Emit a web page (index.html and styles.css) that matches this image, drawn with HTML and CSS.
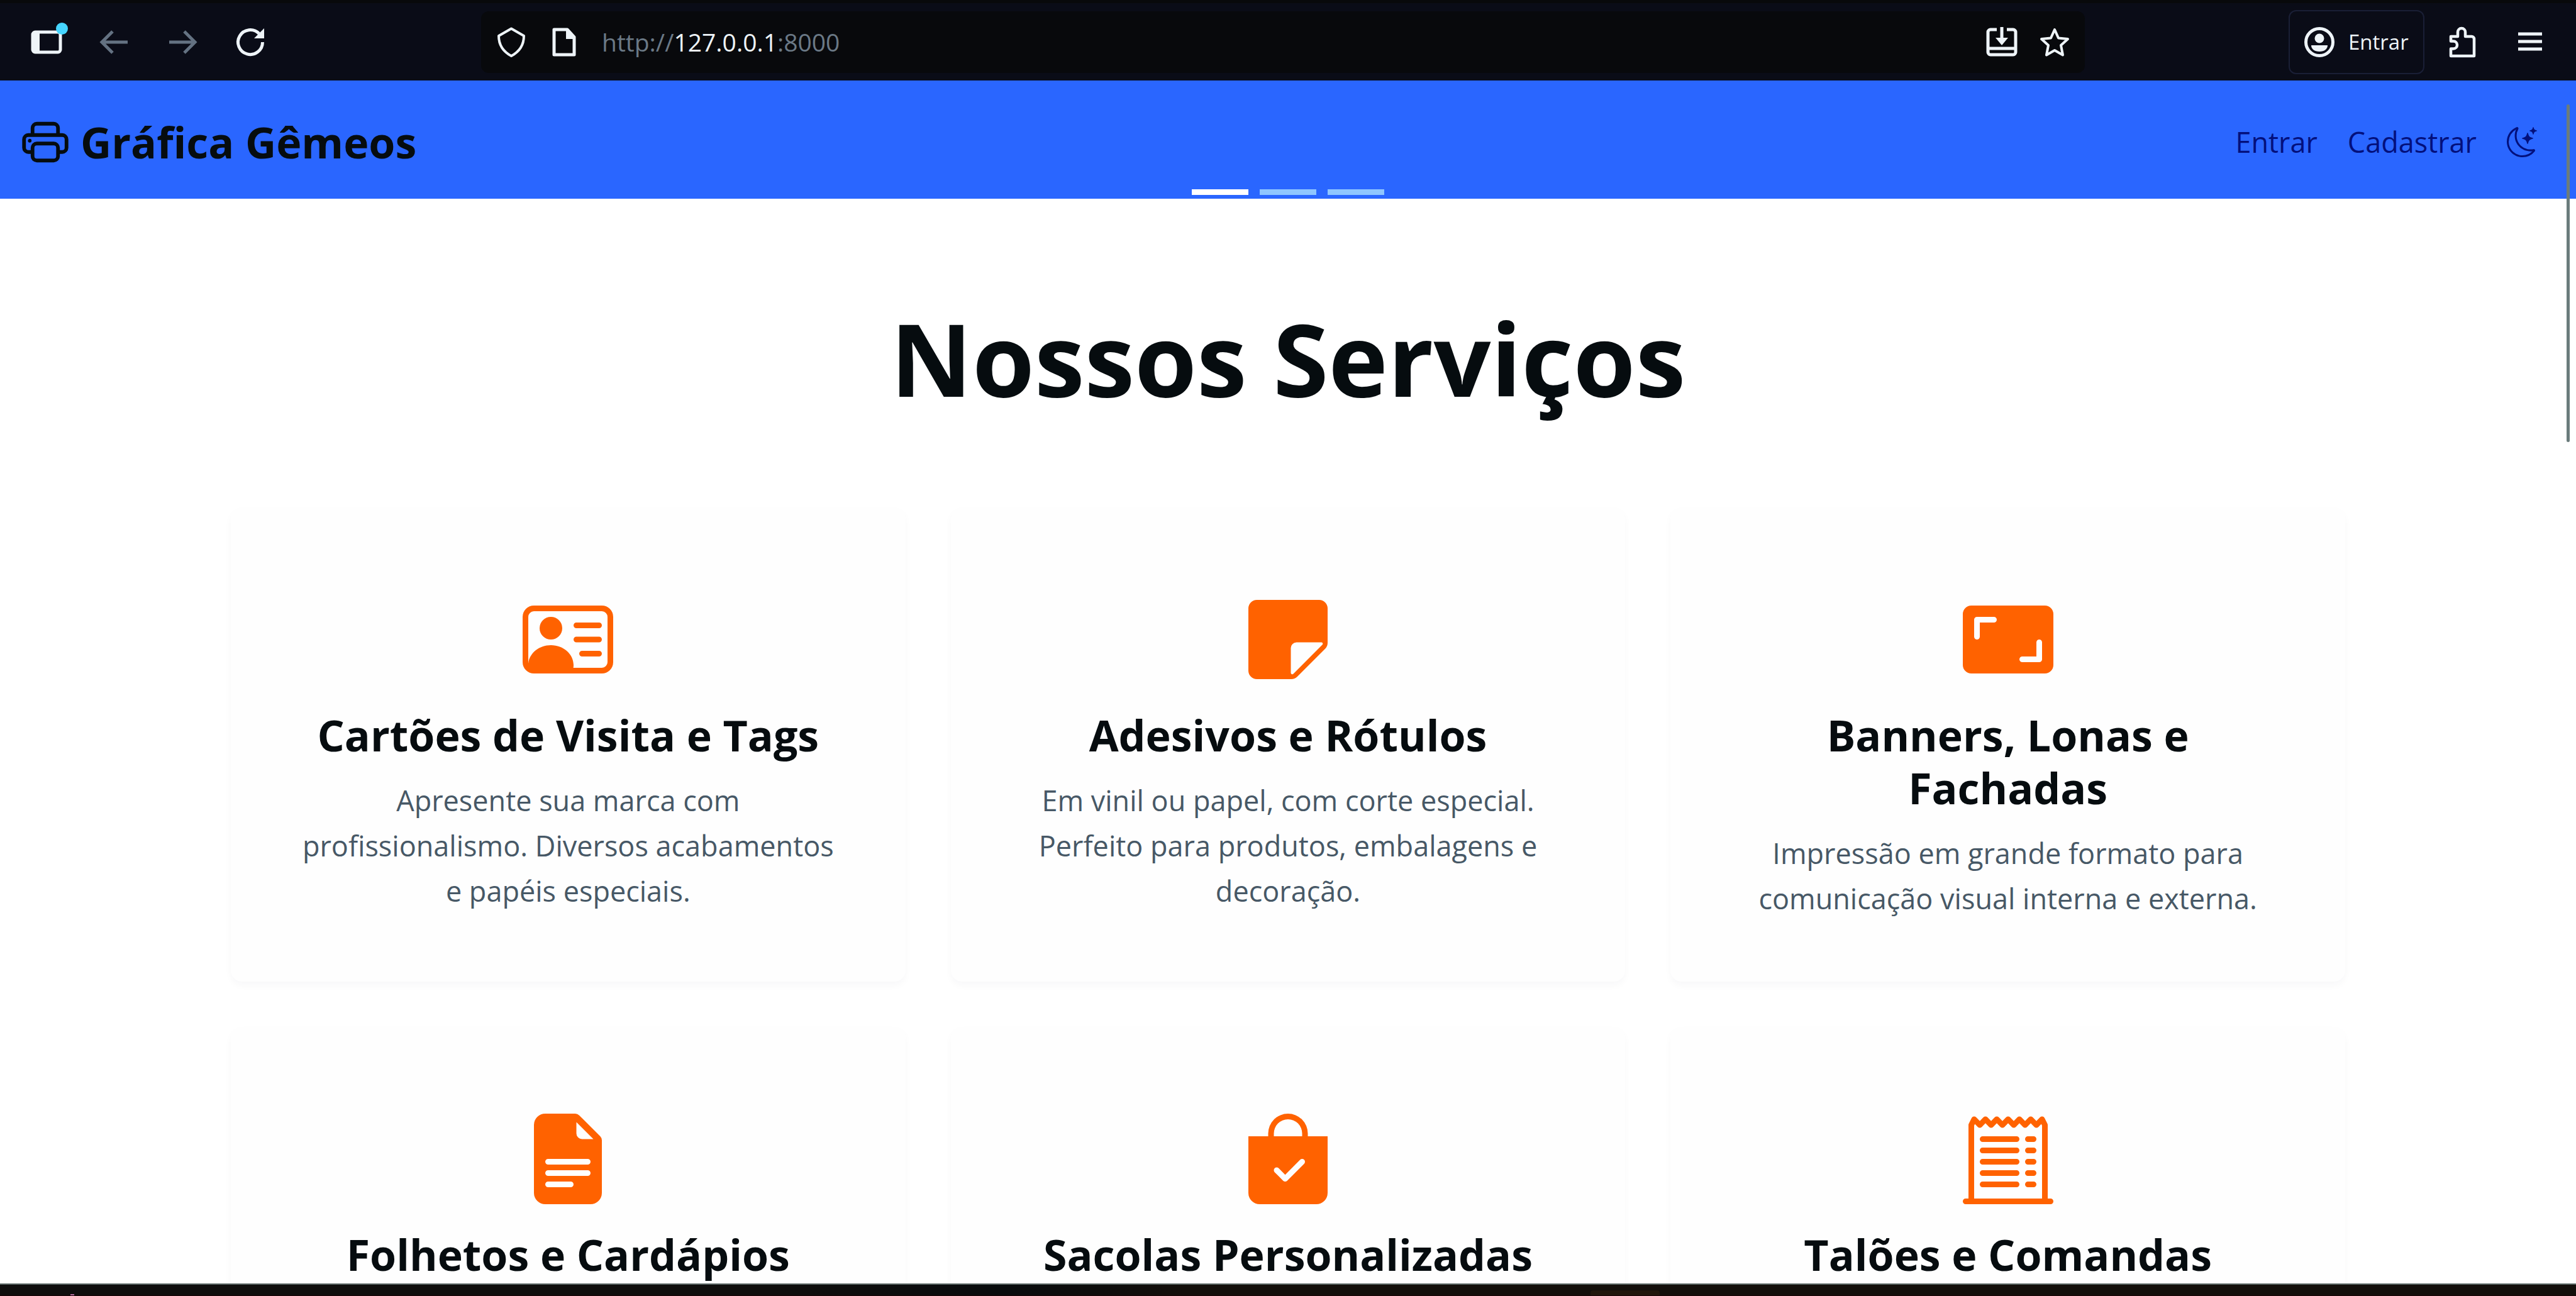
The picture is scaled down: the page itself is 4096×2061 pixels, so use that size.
FILE: index.html
```html
<!DOCTYPE html>
<html lang="pt-BR">
<head>
<meta charset="utf-8">
<title>Gráfica Gêmeos</title>
<link rel="stylesheet" href="styles.css">
</head>
<body>
<header class="toolbar">
  <div class="tools">
    <button class="tool" aria-label="Barra lateral">
      <svg class="glyph" viewBox="0 0 48 48"><rect x="2" y="8" width="44" height="32" rx="4" fill="none" stroke="currentColor" stroke-width="5"/><rect x="2" y="8" width="11" height="32" fill="currentColor"/></svg>
      <span class="dot"></span>
    </button>
    <button class="tool muted" aria-label="Voltar">
      <svg class="glyph" viewBox="0 0 48 48"><path d="M45 24H5M21 7 4 24l17 17" fill="none" stroke="currentColor" stroke-width="5"/></svg>
    </button>
    <button class="tool muted" aria-label="Avançar">
      <svg class="glyph" viewBox="0 0 48 48"><path d="M3 24h40M27 7l17 17-17 17" fill="none" stroke="currentColor" stroke-width="5"/></svg>
    </button>
    <button class="tool" aria-label="Recarregar">
      <svg class="glyph" viewBox="0 0 48 48"><path d="M43.500 24A19.500 19.500 0 1 1 38 10.500" fill="none" stroke="currentColor" stroke-width="5"/><path d="M46 2v16H30z" fill="currentColor"/></svg>
    </button>
  </div>
  <div class="address">
    <svg class="glyph" viewBox="0 0 48 48"><path d="M24 2.500 44 14c0 14-7 25-20 32C11 39 4 28 4 14z" fill="none" stroke="currentColor" stroke-width="4" stroke-linejoin="round"/></svg>
    <svg class="glyph" viewBox="0 0 48 48"><path d="M8 4h21l11 12v28H8z" fill="none" stroke="currentColor" stroke-width="5" stroke-linejoin="round"/><path d="M27 3v16h15z" fill="currentColor"/></svg>
    <div class="url" role="textbox" aria-label="Endereço">http://<span class="host">127.0.0.1</span>:8000</div>
    <svg class="glyph" viewBox="0 0 48 48"><path d="M16 4H6a4 4 0 0 0-4 4v32a4 4 0 0 0 4 4h36a4 4 0 0 0 4-4V8a4 4 0 0 0-4-4H32M2 34h44M24 0v22" fill="none" stroke="currentColor" stroke-width="5"/><path d="M14 17h20L24 29z" fill="currentColor"/></svg>
    <svg class="glyph" viewBox="0 0 48 48"><path d="m24 4 6 13.500 15 1.500-11 10 3 15.500L24 37l-13 7.500L14 29 3 19l15-1.500z" fill="none" stroke="currentColor" stroke-width="4" stroke-linejoin="round"/></svg>
  </div>
  <div class="account-tools">
    <button class="account">
      <svg class="glyph" viewBox="0 0 48 48"><circle cx="24" cy="24" r="21.500" fill="none" stroke="currentColor" stroke-width="5"/><circle cx="24" cy="18" r="7.500" fill="currentColor"/><path d="M11 29h26c0 6-5 10-13 10s-13-4-13-10z" fill="currentColor"/></svg>
      Entrar
    </button>
    <button class="tool" aria-label="Extensões">
      <svg class="glyph" viewBox="0 0 48 48"><path d="M6 46V34.500h4a6 6 0 0 0 0-12H6V15h11V8a6 6 0 0 1 12 0v7h10a4 4 0 0 1 4 4v27z" fill="none" stroke="currentColor" stroke-width="4.500" stroke-linejoin="round"/></svg>
    </button>
    <button class="tool" aria-label="Menu">
      <svg class="glyph" viewBox="0 0 48 48"><path d="M5 11h38M5 23h38M5 35h38" stroke="currentColor" stroke-width="5"/></svg>
    </button>
  </div>
</header>

<div class="page">
  <nav class="navbar">
    <a class="brand" href="#">
      <svg class="brand-icon" viewBox="0 0 16 16"><path d="M2.500 8a.5.5 0 1 0 0-1 .5.5 0 0 0 0 1"/><path d="M5 1a2 2 0 0 0-2 2v2H2a2 2 0 0 0-2 2v3a2 2 0 0 0 2 2h1v1a2 2 0 0 0 2 2h6a2 2 0 0 0 2-2v-1h1a2 2 0 0 0 2-2V7a2 2 0 0 0-2-2h-1V3a2 2 0 0 0-2-2zM4 3a1 1 0 0 1 1-1h6a1 1 0 0 1 1 1v2H4zm1 5a2 2 0 0 0-2 2v1H2a1 1 0 0 1-1-1V7a1 1 0 0 1 1-1h12a1 1 0 0 1 1 1v3a1 1 0 0 1-1 1h-1v-1a2 2 0 0 0-2-2zm7 2v3a1 1 0 0 1-1 1H5a1 1 0 0 1-1-1v-3a1 1 0 0 1 1-1h6a1 1 0 0 1 1 1"/></svg>
      Gráfica Gêmeos
    </a>
    <div class="links">
      <a href="#">Entrar</a>
      <a href="#">Cadastrar</a>
      <button class="theme" aria-label="Alternar tema">
        <svg class="theme-icon" viewBox="0 0 16 16"><path d="M6 .278a.77.77 0 0 1 .08.858 7.200 7.200 0 0 0-.878 3.460c0 4.021 3.278 7.277 7.318 7.277q.792-.001 1.533-.16a.79.79 0 0 1 .81.316.73.73 0 0 1-.031.893A8.350 8.350 0 0 1 8.344 16C3.734 16 0 12.286 0 7.710 0 4.266 2.114 1.312 5.124.06A.75.75 0 0 1 6 .278M4.858 1.311A7.270 7.270 0 0 0 1.025 7.710c0 4.020 3.279 7.276 7.319 7.276a7.320 7.320 0 0 0 5.205-2.162q-.506.063-1.029.063c-4.610 0-8.343-3.714-8.343-8.290 0-1.167.242-2.278.681-3.286"/><path d="M10.794 3.148a.217.217 0 0 1 .412 0l.387 1.162c.173.518.579.924 1.097 1.097l1.162.387a.217.217 0 0 1 0 .412l-1.162.387a1.730 1.730 0 0 0-1.097 1.097l-.387 1.162a.217.217 0 0 1-.412 0l-.387-1.162A1.730 1.730 0 0 0 9.310 6.593l-1.162-.387a.217.217 0 0 1 0-.412l1.162-.387a1.730 1.730 0 0 0 1.097-1.097zM13.863.099a.145.145 0 0 1 .274 0l.258.774c.115.346.386.617.732.732l.774.258a.145.145 0 0 1 0 .274l-.774.258a1.160 1.160 0 0 0-.732.732l-.258.774a.145.145 0 0 1-.274 0l-.258-.774a1.160 1.160 0 0 0-.732-.732l-.774-.258a.145.145 0 0 1 0-.274l.774-.258c.346-.115.617-.386.732-.732z"/></svg>
      </button>
    </div>
    <div class="indicators">
      <button class="indicator active" aria-label="Slide 1"></button>
      <button class="indicator" aria-label="Slide 2"></button>
      <button class="indicator" aria-label="Slide 3"></button>
    </div>
  </nav>

  <main class="services">
    <h1 class="heading">Nossos Serviços</h1>
    <div class="grid">
      <article class="card">
        <svg class="card-icon" viewBox="0 0 16 16"><path d="M5 8a2 2 0 1 0 0-4 2 2 0 0 0 0 4m4-2.500a.5.5 0 0 1 .5-.5h4a.5.5 0 0 1 0 1h-4a.5.5 0 0 1-.5-.5M9 8a.5.5 0 0 1 .5-.5h4a.5.5 0 0 1 0 1h-4A.5.5 0 0 1 9 8m1 2.500a.5.5 0 0 1 .5-.5h3a.5.5 0 0 1 0 1h-3a.5.5 0 0 1-.5-.5"/><path d="M2 2a2 2 0 0 0-2 2v8a2 2 0 0 0 2 2h12a2 2 0 0 0 2-2V4a2 2 0 0 0-2-2zM1 4a1 1 0 0 1 1-1h12a1 1 0 0 1 1 1v8a1 1 0 0 1-1 1H8.960q.04-.245.04-.5C9 10.567 7.210 9 5 9c-2.086 0-3.800 1.398-3.984 3.181A1 1 0 0 1 1 12z"/></svg>
        <h2 class="card-title">Cartões de Visita e Tags</h2>
        <p class="card-text">Apresente sua marca com profissionalismo. Diversos acabamentos e papéis especiais.</p>
      </article>
      <article class="card">
        <svg class="card-icon" viewBox="0 0 16 16"><path d="M2.500 1A1.500 1.500 0 0 0 1 2.500v11A1.500 1.500 0 0 0 2.500 15h6.086a1.500 1.500 0 0 0 1.060-.44l4.915-4.914A1.500 1.500 0 0 0 15 8.586V2.500A1.500 1.500 0 0 0 13.500 1zm6 8.500a1 1 0 0 1 1-1h4.396a.25.25 0 0 1 .177.427l-5.146 5.146a.25.25 0 0 1-.427-.177z"/></svg>
        <h2 class="card-title">Adesivos e Rótulos</h2>
        <p class="card-text">Em vinil ou papel, com corte especial. Perfeito para produtos, embalagens e decoração.</p>
      </article>
      <article class="card">
        <svg class="card-icon" viewBox="0 0 16 16"><path d="M0 12.500v-9A1.500 1.500 0 0 1 1.500 2h13A1.500 1.500 0 0 1 16 3.500v9a1.500 1.500 0 0 1-1.500 1.500h-13A1.500 1.500 0 0 1 0 12.500M2.500 4a.5.5 0 0 0-.5.5v3a.5.5 0 0 0 1 0V5h2.500a.5.5 0 0 0 0-1zm11 8a.5.5 0 0 0 .5-.5v-3a.5.5 0 0 0-1 0V11h-2.500a.5.5 0 0 0 0 1z"/></svg>
        <h2 class="card-title">Banners, Lonas e Fachadas</h2>
        <p class="card-text">Impressão em grande formato para comunicação visual interna e externa.</p>
      </article>
      <article class="card">
        <svg class="card-icon" viewBox="0 0 16 16"><path d="M9.293 0H4a2 2 0 0 0-2 2v12a2 2 0 0 0 2 2h8a2 2 0 0 0 2-2V4.707A1 1 0 0 0 13.707 4L10 .293A1 1 0 0 0 9.293 0M9.500 3.500v-2l3 3h-2a1 1 0 0 1-1-1M4.500 9a.5.5 0 0 1 0-1h7a.5.5 0 0 1 0 1zM4 10.500a.5.5 0 0 1 .5-.5h7a.5.5 0 0 1 0 1h-7a.5.5 0 0 1-.5-.5m.5 2.500a.5.5 0 0 1 0-1h4a.5.5 0 0 1 0 1z"/></svg>
        <h2 class="card-title">Folhetos e Cardápios</h2>
      </article>
      <article class="card">
        <svg class="card-icon" viewBox="0 0 16 16"><path fill-rule="evenodd" d="M10.500 3.500a2.500 2.500 0 0 0-5 0V4h5zm1 0V4H15v10a2 2 0 0 1-2 2H3a2 2 0 0 1-2-2V4h3.500v-.5a3.500 3.500 0 1 1 7 0m-.646 5.354a.5.5 0 0 0-.708-.708L7.500 10.793 6.354 9.646a.5.5 0 1 0-.708.708l1.500 1.500a.5.5 0 0 0 .708 0z"/></svg>
        <h2 class="card-title">Sacolas Personalizadas</h2>
      </article>
      <article class="card">
        <svg class="card-icon" viewBox="0 0 16 16"><path d="M3.500 4.500h6M3.500 6.500h6M3.500 8.500h6M3.500 10.500h6M3.500 12.500h6M11.500 4.500h1M11.500 6.500h1M11.500 8.500h1M11.500 10.500h1M11.500 12.500h1" stroke="currentColor" stroke-linecap="round"/><path d="M2.354.646a.5.5 0 0 0-.801.13l-.5 1A.5.5 0 0 0 1 2v13H.5a.5.5 0 0 0 0 1h15a.5.5 0 0 0 0-1H15V2a.5.5 0 0 0-.053-.224l-.5-1a.5.5 0 0 0-.8-.13L13 1.293l-.646-.647a.5.5 0 0 0-.708 0L11 1.293l-.646-.647a.5.5 0 0 0-.708 0L9 1.293 8.354.646a.5.5 0 0 0-.708 0L7 1.293 6.354.646a.5.5 0 0 0-.708 0L5 1.293 4.354.646a.5.5 0 0 0-.708 0L3 1.293zm-.217 1.198.51.51a.5.5 0 0 0 .707 0L4 1.707l.646.647a.5.5 0 0 0 .708 0L6 1.707l.646.647a.5.5 0 0 0 .708 0L8 1.707l.646.647a.5.5 0 0 0 .708 0L10 1.707l.646.647a.5.5 0 0 0 .708 0L12 1.707l.646.647a.5.5 0 0 0 .708 0l.509-.51.137.274V15H2V2.118z"/></svg>
        <h2 class="card-title">Talões e Comandas</h2>
      </article>
    </div>
  </main>
  <div class="scroll-thumb"></div>
</div>

<footer class="taskbar"><span class="task-mark"></span><span class="task-active"></span></footer>
</body>
</html>
```
FILE: styles.css
```css
* {
  box-sizing: border-box;
}

body {
  margin: 0;
  height: 100vh;
  display: flex;
  flex-direction: column;
  overflow: hidden;
  background: #fff;
  color: #060c0f;
  font-family: "Open Sans", "Noto Sans", sans-serif;
  font-size: 45px;
  line-height: 72px;
}

button {
  padding: 0;
  border: 0;
  background: none;
  color: inherit;
  font: inherit;
}

a {
  color: inherit;
  text-decoration: none;
}

svg {
  display: block;
  flex: none;
  fill: currentColor;
  overflow: visible;
}

/* Browser toolbar */
.toolbar {
  flex: none;
  display: flex;
  align-items: center;
  height: 128px;
  padding-left: 20px;
  border-top: 5px solid #08090b;
  background: #0a0c17;
  color: #eef4f8;
}

.tools,
.account-tools {
  display: flex;
  align-items: center;
}

.tool {
  position: relative;
  display: flex;
  justify-content: center;
  width: 108px;
}

.muted {
  color: #647282;
}

.glyph {
  width: 48px;
  height: 48px;
}

.dot {
  position: absolute;
  top: -7px;
  right: 20px;
  width: 19px;
  height: 19px;
  border-radius: 50%;
  background: #45d5ff;
}

.address {
  flex: 1;
  display: flex;
  align-items: center;
  gap: 36px;
  height: 98px;
  margin: 0 324px 0 313px;
  padding: 0 24px;
  border-radius: 12px;
  background: #08090c;
}

.url {
  flex: 1;
  color: #6b7986;
  font-size: 39px;
}

.host {
  color: #eef4f8;
}

.account-tools {
  width: 457px;
}

.account {
  display: flex;
  align-items: center;
  gap: 22px;
  width: 216px;
  height: 102px;
  margin-right: 6px;
  padding-left: 23px;
  border: 2px solid #1a1f36;
  border-radius: 12px;
  font-size: 33px;
}

/* Site */
.page {
  position: relative;
  flex: 1;
  min-height: 0;
  overflow: hidden;
}

.navbar {
  position: relative;
  display: flex;
  align-items: center;
  justify-content: space-between;
  height: 188px;
  padding: 8px 62px 0 36px;
  background: #2a66ff;
}

.brand {
  display: flex;
  align-items: center;
  gap: 20px;
  font-size: 68px;
  font-weight: 700;
}

.brand-icon {
  width: 72px;
  height: 72px;
  stroke: currentColor;
  stroke-width: 0.3;
}

.links {
  display: flex;
  align-items: center;
  gap: 48px;
  color: #03107c;
}

.theme-icon {
  width: 48px;
  height: 48px;
}

.indicators {
  position: absolute;
  inset: auto 0 6px;
  display: flex;
  justify-content: center;
  gap: 18px;
}

.indicator {
  width: 90px;
  height: 9px;
  background: #8fc6ff;
}

.active {
  background: #fff;
}

.services {
  max-width: 3362px;
  margin: 0 auto;
  padding-top: 152px;
}

.heading {
  margin: 0 0 136px;
  font-size: 160px;
  line-height: 203px;
  text-align: center;
}

.grid {
  display: grid;
  grid-template-columns: repeat(3, 1fr);
  grid-auto-rows: 1fr;
  gap: 72px;
}

.card {
  display: flex;
  flex-direction: column;
  align-items: center;
  min-height: 754px;
  padding: 138px 100px 90px;
  border-radius: 18px;
  background: #fefefe;
  box-shadow: 0 6px 12px rgba(0, 40, 50, 0.03);
  text-align: center;
}

.card-icon {
  width: 144px;
  height: 144px;
  color: #ff6200;
}

.card-title {
  margin: 38px 0 26px;
  font-size: 68px;
  line-height: 84px;
}

.card-text {
  margin: 0;
  color: #475866;
}

.scroll-thumb {
  position: absolute;
  top: 38px;
  right: 10px;
  width: 5px;
  height: 537px;
  border-radius: 3px;
  background: #6b7c7c;
}

/* Desktop taskbar edge */
.taskbar {
  flex: none;
  display: flex;
  align-items: flex-end;
  height: 20px;
  padding-left: 112px;
  border-top: 2px solid #5f6b69;
  border-bottom: 1px solid #1d0508;
  background: linear-gradient(90deg, #0f0e0d 30%, #080b0d 39%, #130f0b 46%);
}

.task-mark {
  width: 6px;
  height: 2px;
  background: #b06a9c;
}

.task-active {
  width: 110px;
  height: 8px;
  margin-left: 2411px;
  border-radius: 4px 4px 0 0;
  background: #21170c;
}
```
